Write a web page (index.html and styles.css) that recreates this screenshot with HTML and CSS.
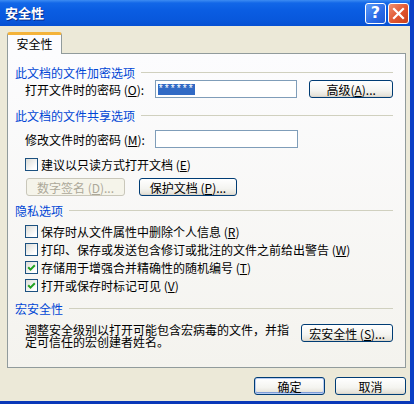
FILE: index.html
```html
<!DOCTYPE html>
<html>
<head>
<meta charset="utf-8">
<link rel="stylesheet" href="styles.css">
</head>
<body>
<div class="window">
  <div class="titlebar">
    <span class="title">安全性</span>
    <div class="tb-buttons">
      <span class="tb-btn help">?</span>
      <span class="tb-btn close"><svg width="13" height="13" viewBox="0 0 13 13"><path d="M2 2 L11 11 M11 2 L2 11" stroke="#fff" stroke-width="2.2" stroke-linecap="square"/></svg></span>
    </div>
  </div>
  <div class="client">
    <div class="tabs"><div class="tab">安全性</div></div>
    <div class="panel">
      <div class="group-h h1"><span>此文档的文件加密选项</span></div>
      <div class="row r-pwd">
        <span class="lbl">打开文件时的密码 (<u>O</u>):</span>
        <span class="input"><span class="sel">******</span></span>
        <span class="btn adv">高级(<u>A</u>)...</span>
      </div>
      <div class="group-h h2"><span>此文档的文件共享选项</span></div>
      <div class="row r-mod">
        <span class="lbl">修改文件时的密码 (<u>M</u>):</span>
        <span class="input"></span>
      </div>
      <div class="row cb r-ro">
        <span class="box"></span><span>建议以只读方式打开文档 (<u>E</u>)</span>
      </div>
      <div class="row r-btns">
        <span class="btn disabled sig">数字签名 (<u>D</u>)...</span>
        <span class="btn prot">保护文档 (<u>P</u>)...</span>
      </div>
      <div class="group-h h3"><span>隐私选项</span></div>
      <div class="cb-list">
        <div class="row cb"><span class="box"></span><span>保存时从文件属性中删除个人信息 (<u>R</u>)</span></div>
        <div class="row cb"><span class="box"></span><span>打印、保存或发送包含修订或批注的文件之前给出警告 (<u>W</u>)</span></div>
        <div class="row cb"><span class="box checked"><svg width="11" height="11" viewBox="0 0 11 11"><path d="M2.2 5.2 L4.5 7.6 L8.8 3.2" fill="none" stroke="#21A121" stroke-width="2"/></svg></span><span>存储用于增强合并精确性的随机编号 (<u>T</u>)</span></div>
        <div class="row cb"><span class="box checked"><svg width="11" height="11" viewBox="0 0 11 11"><path d="M2.2 5.2 L4.5 7.6 L8.8 3.2" fill="none" stroke="#21A121" stroke-width="2"/></svg></span><span>打开或保存时标记可见 (<u>V</u>)</span></div>
      </div>
      <div class="group-h h4"><span>宏安全性</span></div>
      <div class="row r-macro">
        <span class="macro-text">调整安全级别以打开可能包含宏病毒的文件，并指定可信任的宏创建者姓名。</span>
        <span class="btn macro">宏安全性 (<u>S</u>)...</span>
      </div>
    </div>
    <div class="footer">
      <span class="btn dlg default">确定</span>
      <span class="btn dlg">取消</span>
    </div>
  </div>
</div>
</body>
</html>
```
FILE: styles.css
```css
html, body {
  margin: 0;
  padding: 0;
  background: #ffffff;
}
body {
  font-family: "Noto Sans CJK SC", "Liberation Sans", sans-serif;
  font-size: 12px;
  color: #000;
  width: 417px;
  height: 417px;
  overflow: hidden;
}
u { text-decoration: underline; }

.window {
  width: 414px;
  border-right: 4px solid #0A3FC6;
  border-bottom: 3px solid #0A38B8;
  box-sizing: border-box;
}

.titlebar {
  height: 26px;
  display: flex;
  align-items: center;
  justify-content: space-between;
  background: linear-gradient(#3D8CF2 0, #1267E8 3px, #0A5DE2 40%, #0858DC 75%, #0650D2 100%);
  padding: 0 1px 0 5px;
}
.title {
  color: #fff;
  font-weight: bold;
  font-size: 13px;
  line-height: 26px;
  text-shadow: 1px 1px 0 #0A2E8A;
}
.tb-buttons {
  display: flex;
  gap: 2px;
}
.tb-btn {
  width: 21px;
  height: 21px;
  box-sizing: border-box;
  border: 1px solid #fff;
  border-radius: 3px;
  display: flex;
  align-items: center;
  justify-content: center;
}
.help {
  background: linear-gradient(135deg, #5C9BF8, #2A6AE6 60%, #1E58D6);
  color: #fff;
  font-weight: bold;
  font-family: "DejaVu Sans", sans-serif;
  font-size: 16px;
  line-height: 1;
}
.close {
  background: linear-gradient(135deg, #F09070, #E0552F 55%, #C8401E);
}

.client {
  background: #ECE9D8;
  height: 375px;
  box-sizing: border-box;
  padding: 6px 4px 0 7px;
}
.tabs {
  height: 21px;
  display: flex;
  position: relative;
  z-index: 2;
}
.tab {
  width: 55px;
  height: 22px;
  box-sizing: border-box;
  border: 1px solid #919B9C;
  border-bottom: none;
  border-top: 3px solid #F4B33A;
  border-radius: 3px 3px 0 0;
  background: #FCFCFE;
  text-align: center;
  line-height: 18px;
  font-size: 12px;
}

.panel {
  height: 315px;
  box-sizing: border-box;
  border: 1px solid #919B9C;
  background: linear-gradient(#FCFCFE, #F4F3EE);
  padding: 0 12px 0 7px;
}

.group-h {
  display: flex;
  align-items: center;
  height: 16px;
  color: #0046D5;
}
.group-h::after {
  content: "";
  flex: 1;
  border-top: 1px solid #D0D0BF;
  margin-left: 6px;
}
.h1 { margin-top: 10px; }
.h2 { margin-top: 9px; }
.h3 { margin-top: 6px; }
.h4 { margin-top: 6px; }

.row {
  display: flex;
  align-items: center;
  margin-left: 10px;
}
.r-pwd { height: 18px; }
.r-mod { height: 18px; margin-top: 7px; }
.r-ro { height: 16px; margin-top: 8px; }
.r-btns { height: 18px; margin-top: 6px; }

.lbl { width: 130px; white-space: nowrap; }
.input {
  width: 143px;
  height: 18px;
  box-sizing: border-box;
  border: 1px solid #7F9DB9;
  background: #fff;
  display: flex;
  align-items: center;
  padding-left: 2px;
}
.sel {
  background: #316AC5;
  color: #fff;
  font-family: "Liberation Mono", monospace;
  font-size: 10px;
  line-height: 11px;
  padding: 0 1px 0 0;
}

.btn {
  display: flex;
  align-items: center;
  justify-content: center;
  height: 18px;
  box-sizing: border-box;
  border: 1px solid #003C74;
  border-radius: 3px;
  background: linear-gradient(#FFFFFF, #F4F4F0 60%, #E6E3DA 90%, #D6D0C5);
  white-space: nowrap;
  font-size: 12px;
}
.adv { width: 84px; margin-left: 12px; }
.sig { width: 99px; margin-left: 1px; }
.prot { width: 98px; margin-left: 14px; }
.btn.disabled {
  border-color: #C9C7BA;
  background: #F5F4EA;
  color: #ACA899;
}

.cb .box {
  width: 13px;
  height: 13px;
  box-sizing: border-box;
  border: 1px solid #1C5180;
  background: linear-gradient(135deg, #DCDCD7, #FFFFFF 80%);
  margin-right: 3px;
  display: flex;
  align-items: center;
  justify-content: center;
}
.cb-list { margin-top: 4px; }
.cb-list .row { height: 18px; }

.r-macro {
  margin-top: 8px;
  align-items: flex-start;
}
.macro-text {
  width: 270px;
  line-height: 12px;
}
.macro { width: 92px; margin-left: 7px; }

.footer {
  display: flex;
  justify-content: flex-end;
  gap: 10px;
  margin-top: 9px;
}
.dlg { width: 71px; }
.default {
  box-shadow: inset 0 0 0 1px #B8CCF2, inset 0 -1px 0 1px #7F9DD8;
}
```
